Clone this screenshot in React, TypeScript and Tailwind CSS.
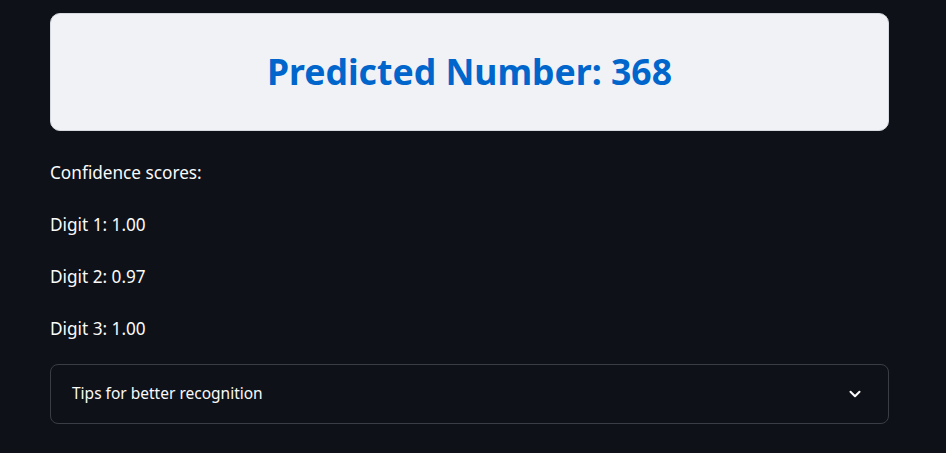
import React from 'react';
import { ChevronDown } from 'lucide-react';

const scores = [
  { label: 'Digit 1', value: '1.00' },
  { label: 'Digit 2', value: '0.97' },
  { label: 'Digit 3', value: '1.00' },
];

const App: React.FC = () => {
  return (
    <div
      className="min-h-[453px] w-full bg-[#0e1117] text-[#fafafa]"
      style={{ fontFamily: '"Noto Sans", Lato, sans-serif' }}
    >
      <div className="ml-[50px] w-[839px] pt-[13px]">
        <div className="flex h-[118px] items-center justify-center rounded-[10px] border border-[#d6d9df] bg-[#f0f2f6]">
          <h1 className="text-[35.6px] font-bold text-[#0066cc]">Predicted Number: 368</h1>
        </div>

        <div className="mt-[16px] flex flex-col">
          <p className="flex h-[52px] items-center text-[17.2px]">Confidence scores:</p>
          {scores.map((s) => (
            <p key={s.label} className="flex h-[52px] items-center text-[17.2px]">
              {s.label}: {s.value}
            </p>
          ))}
        </div>

        <div className="mt-[9px] flex h-[60px] items-center justify-between rounded-[8px] border border-[#3a3d45] pl-[21px] pr-[24px]">
          <span className="text-[15.5px]">Tips for better recognition</span>
          <ChevronDown size={18} strokeWidth={2.75} />
        </div>
      </div>
    </div>
  );
};

export default App;
